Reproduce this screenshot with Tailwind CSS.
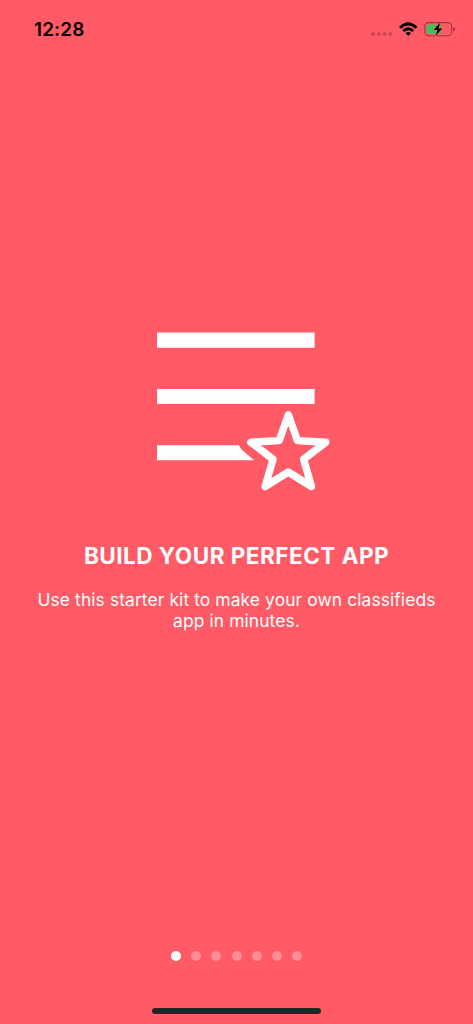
<!DOCTYPE html>
<html lang="en">
<head>
<meta charset="utf-8">
<title>Walkthrough</title>
<script src="https://cdn.jsdelivr.net/npm/@tailwindcss/browser@4"></script>
</head>
<body>
<main class="w-[473px] h-[1024px] bg-[#ff5a66] flex flex-col items-center overflow-hidden font-['Inter',sans-serif] text-white">
  <header class="w-full h-[58px] pl-[34px] pr-[17px] flex items-center justify-between text-black">
    <time class="pt-[2px] text-[19px] leading-6 font-semibold tracking-[0.1px]">12:28</time>
    <svg class="w-[88px] h-5" viewBox="368 19 88 20">
      <g fill="#000" fill-opacity=".2"><circle cx="373" cy="34" r="2.1"/><circle cx="378.8" cy="34" r="2.1"/><circle cx="384.6" cy="34" r="2.1"/><circle cx="390.3" cy="34" r="2.1"/></g>
      <path d="M399.1 26.8L401 28.8Q408.2 22.4 415.5 28.8L417.4 26.8Q408.2 17.8 399.1 26.8ZM402.3 30L404.3 32Q408.3 28.5 412.2 32L414.2 30Q408.2 24.5 402.3 30ZM405.5 33.2L408.2 36L411 33.2Q408.2 31 405.5 33.2Z"/>
      <rect x="424.9" y="22.6" width="26.8" height="13.2" rx="3.8" fill="none" stroke="#000" stroke-opacity=".4" stroke-width="1.1"/>
      <path d="M453.3 27V31.5Q455 30.9 455 29.2T453.3 27Z" fill-opacity=".45"/>
      <rect x="427" y="24.6" width="14.8" height="9.2" rx="2" fill="#34c759"/>
      <path d="M440 22.8L433.7 30H437.3L435.8 35.8L442.2 28.4H438.6Z" stroke="#ff5a66" stroke-width="1.2" paint-order="stroke"/>
    </svg>
  </header>
  <svg class="mt-[270px] ml-[13px] w-[180px] h-[170px]" viewBox="153 328 180 170" fill="#fff">
    <path d="M157 332.6H314.6V347.7H157ZM157 388.9H314.6V404H157ZM157 445.3H239Q240 448.3 242.5 450.3L254 460.3H157Z"/>
    <path d="M288.3 414.8L297.4 440.6L325.8 442.2L303.6 459.2L311.5 486.5L288.3 472L265.1 486.5L273 459.2L250.8 442.2L279.2 440.6Z" fill="none" stroke="#fff" stroke-width="7.4" stroke-linejoin="round"/>
  </svg>
  <h1 class="mt-[42px] text-[22.5px] leading-8 font-bold tracking-[0.5px] whitespace-nowrap">BUILD YOUR PERFECT APP</h1>
  <p class="mt-[17px] text-center text-[17.4px] leading-[21px] tracking-[0.11px] whitespace-nowrap">Use this starter kit to make your own classifieds<br>app in minutes.</p>
  <div class="mt-auto mb-[47px] flex gap-[10.1px]">
    <i class="size-[10px] rounded-full bg-white"></i>
    <i class="size-[10px] rounded-full bg-white/30"></i>
    <i class="size-[10px] rounded-full bg-white/30"></i>
    <i class="size-[10px] rounded-full bg-white/30"></i>
    <i class="size-[10px] rounded-full bg-white/30"></i>
    <i class="size-[10px] rounded-full bg-white/30"></i>
    <i class="size-[10px] rounded-full bg-white/30"></i>
  </div>
  <div class="mb-[10px] w-[169px] h-[6px] shrink-0 rounded-full bg-[#242424]"></div>
</main>
</body>
</html>
